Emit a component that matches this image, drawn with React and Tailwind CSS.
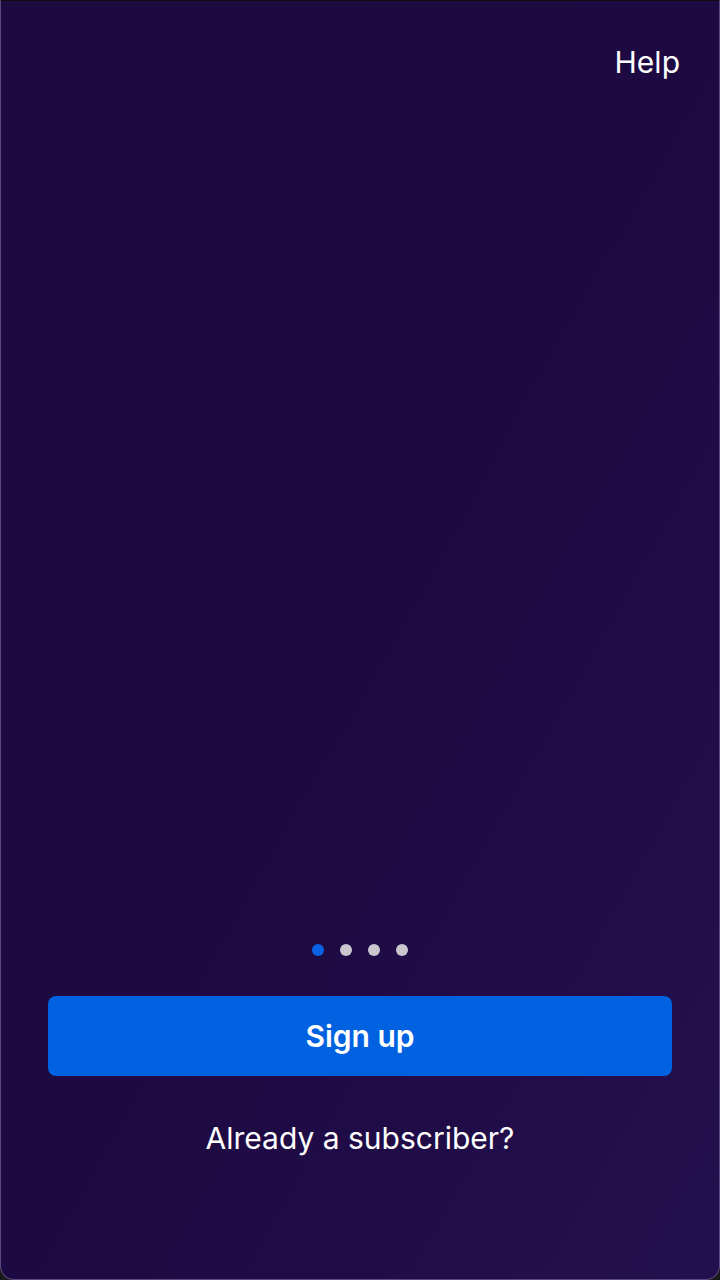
import React from 'react'

const Dots = ({ count = 4, active = 0 }) => (
  <div className="flex items-center justify-center gap-4">
    {Array.from({ length: count }).map((_, i) => (
      <span
        key={i}
        className={i === active ? 'h-3 w-3 rounded-full bg-[#0a62e6]' : 'h-3 w-3 rounded-full bg-[#c9c6d0]'}
      />
    ))}
  </div>
)

const App = () => {
  return (
    <div className="h-[1280px] w-[720px] bg-[#1a1a1a]" style={{ fontFamily: 'Inter, "Noto Sans", sans-serif' }}>
      <div className="flex h-full w-full flex-col rounded-b-[14px] border-x border-b border-t border-x-[#5a4a82] border-b-[#5a4a82] border-t-[#0d0d0d] bg-gradient-to-br from-[#1c0a40] via-[#1d0a42] to-[#23104e]">
        <div className="flex justify-end pr-[39px] pt-[43px]">
          <button className="text-[30px] leading-9 text-white">Help</button>
        </div>

        <div className="flex-1" />

        <div className="flex flex-col px-[47px] pb-[123px]">
          <Dots count={4} active={0} />
          <button className="mt-10 h-20 w-full rounded-lg bg-[#0062e0] text-[30px] font-semibold text-white">
            Sign up
          </button>
          <button className="mt-[44px] text-[30px] leading-9 text-white">Already a subscriber?</button>
        </div>
      </div>
    </div>
  )
}

export default App
